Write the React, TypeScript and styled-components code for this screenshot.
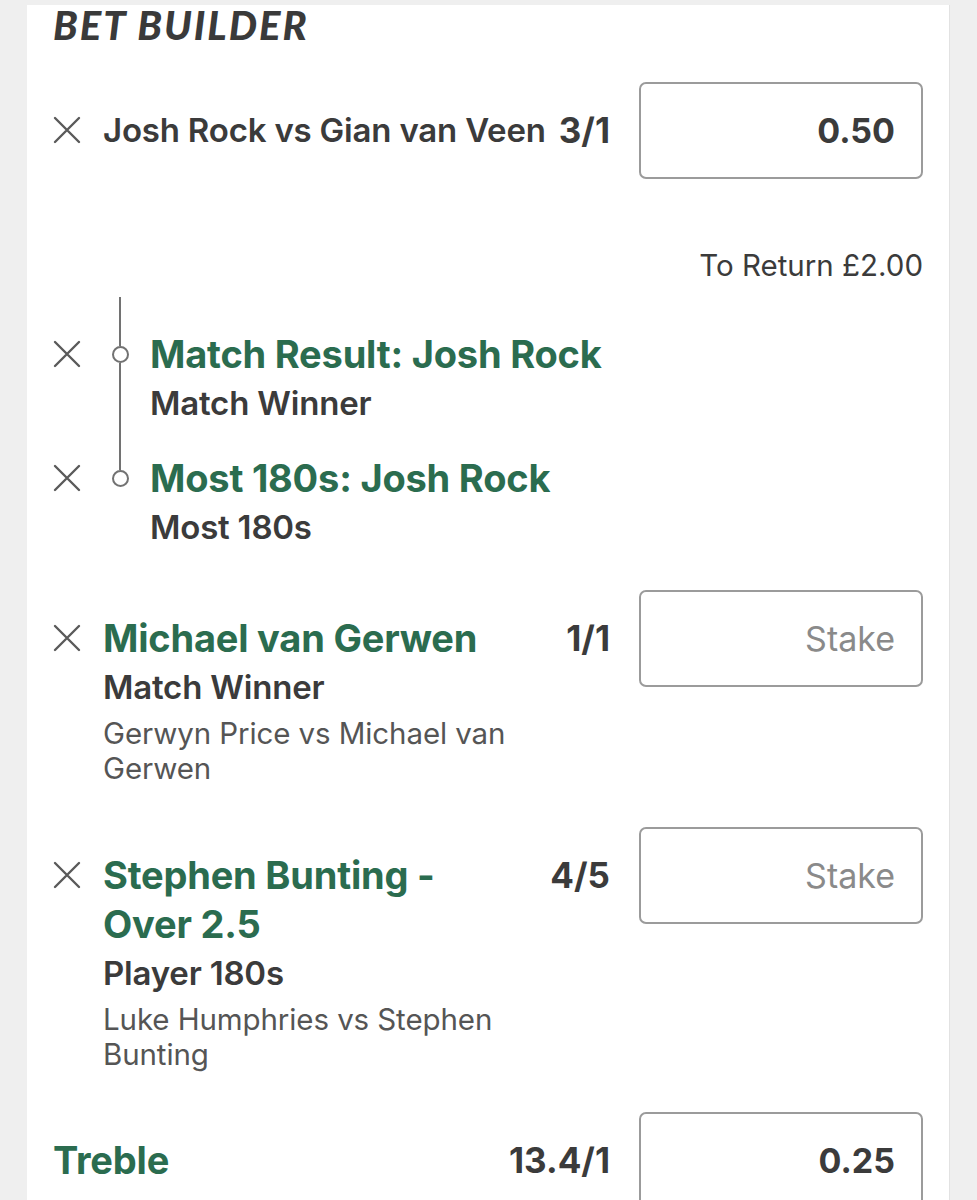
import React from 'react';
import styled, { createGlobalStyle } from 'styled-components';

const GlobalStyle = createGlobalStyle`
  body {
    margin: 0;
    background: #efefef;
    font-family: Inter, 'Liberation Sans', sans-serif;
    color: #3b3b3b;
  }
`;

const green = '#2b6c4f';

const Card = styled.div`
  margin: 5px 27px 0 27px;
  min-height: 1195px;
  background: #ffffff;
  border-right: 1px solid #e2e2e2;
  padding: 0 26px;
  box-sizing: border-box;
`;

const Title = styled.h1`
  margin: 0;
  font-family: Lato, 'Liberation Sans', sans-serif;
  font-weight: 900;
  font-style: italic;
  font-size: 40px;
  line-height: 40px;
  letter-spacing: 2px;
  color: #3a3a3a;
`;

const BetRow = styled.div<{ top: number }>`
  display: grid;
  grid-template-columns: 50px minmax(0, 1fr) 91px 313px;
  margin-top: ${(p) => p.top}px;
  align-items: start;
`;

const CloseCell = styled.div`
  height: 48px;
  margin-top: 24px;
  display: flex;
  align-items: center;
`;

const Info = styled.div<{ nowrap?: boolean }>`
  padding-top: 24px;
  white-space: ${(p) => (p.nowrap ? 'nowrap' : 'normal')};
`;

const Selection = styled.div<{ plain?: boolean }>`
  font-size: ${(p) => (p.plain ? 33 : 38)}px;
  line-height: ${(p) => (p.plain ? 48 : 49)}px;
  font-weight: ${(p) => (p.plain ? 600 : 700)};
  color: ${(p) => (p.plain ? '#3b3b3b' : green)};
  letter-spacing: -0.2px;
`;

const Market = styled.div`
  margin-top: 4px;
  font-size: 33px;
  line-height: 40px;
  font-weight: 600;
  color: #3b3b3b;
  letter-spacing: -0.2px;
`;

const Event = styled.div`
  margin-top: 9px;
  font-size: 29.5px;
  line-height: 35px;
  font-weight: 400;
  color: #555555;
  letter-spacing: -0.1px;
`;

const Odds = styled.div`
  margin-top: 24px;
  display: flex;
  justify-content: flex-end;
  white-space: nowrap;
  font-size: 35px;
  line-height: 48px;
  font-weight: 700;
  color: #3b3b3b;
`;

const StakeInput = styled.input`
  box-sizing: border-box;
  margin-left: 29px;
  width: 284px;
  height: 97px;
  border: 2px solid #9b9b9b;
  border-radius: 7px;
  padding: 0 26px 0 10px;
  background: #ffffff;
  text-align: right;
  font-family: Inter, 'Liberation Sans', sans-serif;
  font-size: 34px;
  font-weight: 700;
  color: #3b3b3b;
  outline: none;
  &::placeholder {
    font-weight: 400;
    font-size: 34px;
    color: #8a8a8a;
  }
`;

const ReturnLine = styled.div`
  margin-top: 68px;
  text-align: right;
  font-size: 29.5px;
  line-height: 36px;
  color: #3b3b3b;
`;

const Legs = styled.div`
  margin-top: 14px;
`;

const LegRow = styled.div`
  display: grid;
  grid-template-columns: 50px 47px 1fr;
`;

const LegText = styled.div<{ top: number }>`
  padding-top: ${(p) => p.top}px;
`;

const Connector = styled.div`
  display: flex;
  flex-direction: column;
  align-items: flex-start;
  padding-left: 16px;
`;

const Segment = styled.div<{ grow?: boolean; h?: number }>`
  width: 2px;
  background: #727272;
  flex: ${(p) => (p.grow ? '1' : 'none')};
  height: ${(p) => (p.h ? `${p.h}px` : 'auto')};
`;

const Node = styled.div`
  box-sizing: border-box;
  width: 17px;
  height: 17px;
  margin-left: -7.5px;
  border: 2px solid #727272;
  border-radius: 50%;
  background: #ffffff;
`;

const LegClose = styled.div<{ top: number }>`
  margin-top: ${(p) => p.top}px;
  height: 48px;
  display: flex;
  align-items: center;
`;

const TrebleRow = styled.div`
  display: grid;
  grid-template-columns: minmax(0, 1fr) 91px 313px;
  margin-top: 40px;
  align-items: start;
`;

const TrebleLabel = styled.div`
  margin-top: 24px;
  font-size: 38px;
  line-height: 48px;
  font-weight: 700;
  color: ${green};
  letter-spacing: -0.2px;
`;

const CloseIcon = () => (
  <svg width="28" height="28" viewBox="0 0 28 28">
    <path d="M2 2 L26 26 M26 2 L2 26" stroke="#5a5a5a" strokeWidth="2.4" strokeLinecap="round" />
  </svg>
);

interface Leg {
  pick: string;
  market: string;
}

const legs: Leg[] = [
  { pick: 'Match Result: Josh Rock', market: 'Match Winner' },
  { pick: 'Most 180s: Josh Rock', market: 'Most 180s' },
];

interface Single {
  pick: string;
  market: string;
  event: string;
  odds: string;
  top: number;
}

const singles: Single[] = [
  {
    pick: 'Michael van Gerwen',
    market: 'Match Winner',
    event: 'Gerwyn Price vs Michael van Gerwen',
    odds: '1/1',
    top: 43,
  },
  {
    pick: 'Stephen Bunting - Over 2.5',
    market: 'Player 180s',
    event: 'Luke Humphries vs Stephen Bunting',
    odds: '4/5',
    top: 41,
  },
];

export default function App() {
  return (
    <>
      <GlobalStyle />
      <Card>
        <Title>BET BUILDER</Title>

        <BetRow top={37}>
          <CloseCell>
            <CloseIcon />
          </CloseCell>
          <Info nowrap>
            <Selection plain>Josh Rock vs Gian van Veen</Selection>
          </Info>
          <Odds>3/1</Odds>
          <StakeInput readOnly defaultValue="0.50" />
        </BetRow>

        <ReturnLine>To Return £2.00</ReturnLine>

        <Legs>
          {legs.map((leg, i) => {
            const last = i === legs.length - 1;
            const top = i === 0 ? 33 : 31;
            return (
              <LegRow key={leg.pick}>
                <LegClose top={top}>
                  <CloseIcon />
                </LegClose>
                <Connector>
                  <Segment h={top + 16} />
                  <Node />
                  {!last && <Segment grow />}
                </Connector>
                <LegText top={top}>
                  <Selection>{leg.pick}</Selection>
                  <Market>{leg.market}</Market>
                </LegText>
              </LegRow>
            );
          })}
        </Legs>

        {singles.map((s) => (
          <BetRow key={s.pick} top={s.top}>
            <CloseCell>
              <CloseIcon />
            </CloseCell>
            <Info>
              <Selection>{s.pick}</Selection>
              <Market>{s.market}</Market>
              <Event>{s.event}</Event>
            </Info>
            <Odds>{s.odds}</Odds>
            <StakeInput readOnly placeholder="Stake" />
          </BetRow>
        ))}

        <TrebleRow>
          <TrebleLabel>Treble</TrebleLabel>
          <Odds>13.4/1</Odds>
          <StakeInput readOnly defaultValue="0.25" />
        </TrebleRow>
      </Card>
    </>
  );
}
